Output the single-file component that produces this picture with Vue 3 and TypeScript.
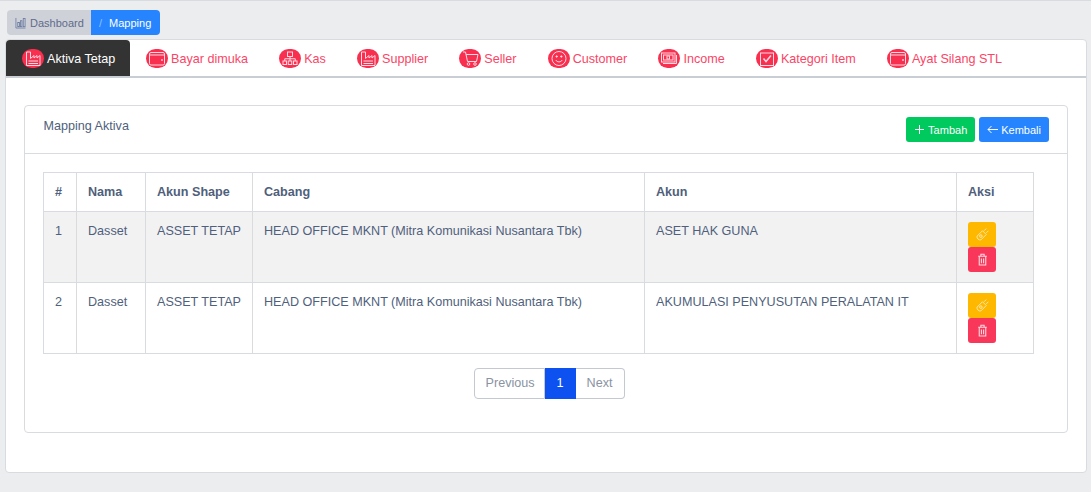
<script setup lang="ts">
const tabs = [
  { label: 'Aktiva Tetap', icon: 'factory' },
  { label: 'Bayar dimuka', icon: 'wallet' },
  { label: 'Kas', icon: 'org' },
  { label: 'Supplier', icon: 'factory' },
  { label: 'Seller', icon: 'cart' },
  { label: 'Customer', icon: 'smile' },
  { label: 'Income', icon: 'money' },
  { label: 'Kategori Item', icon: 'check' },
  { label: 'Ayat Silang STL', icon: 'wallet' },
]

const rows = [
  { no: 1, nama: 'Dasset', shape: 'ASSET TETAP', cabang: 'HEAD OFFICE MKNT (Mitra Komunikasi Nusantara Tbk)', akun: 'ASET HAK GUNA' },
  { no: 2, nama: 'Dasset', shape: 'ASSET TETAP', cabang: 'HEAD OFFICE MKNT (Mitra Komunikasi Nusantara Tbk)', akun: 'AKUMULASI PENYUSUTAN PERALATAN IT' },
]
</script>

<template>
  <div class="page">
    <nav class="crumbs">
      <a class="crumb">
        <svg class="crumb-icon" viewBox="0 0 12 12" fill="none" stroke="#6b7aa0" stroke-width=".9">
          <path d="M1 .5V11.500H11.500" />
          <rect x="3" y="5.500" width="2" height="4.500" />
          <rect x="6" y="3.500" width="1.600" height="6.500" />
          <rect x="9" y="1" width="2" height="9" />
        </svg>
        Dashboard
      </a>
      <a class="crumb current"><span class="slash">/</span>Mapping</a>
    </nav>

    <div class="panel">
      <ul class="tabs">
        <li v-for="(tab, i) in tabs" :key="tab.label" class="tab" :class="{ active: i === 0 }">
          <span class="tab-icon">
            <svg viewBox="0 0 22 19" fill="none" stroke="#ffd9e0" stroke-width="1">
              <template v-if="tab.icon === 'factory'">
                <path d="M4.500 3V16.500H18V6.500L15 9V6.500L12 9V6.500L8.500 9.500V3Z" />
                <path d="M6.500 12H16M6.500 14.500H16" />
              </template>
              <template v-else-if="tab.icon === 'wallet'">
                <rect x="3.500" y="3.500" width="15" height="12.500" rx="1.500" />
                <path d="M3.500 6H18.500" />
                <circle cx="16" cy="11" r=".5" fill="#fff" />
              </template>
              <template v-else-if="tab.icon === 'org'">
                <rect x="8.500" y="3" width="5" height="4.500" />
                <rect x="4" y="12" width="3.500" height="3.500" />
                <rect x="9.250" y="12" width="3.500" height="3.500" />
                <rect x="14.500" y="12" width="3.500" height="3.500" />
                <path d="M11 7.500V12M5.750 12V9.750H16.250V12" />
              </template>
              <template v-else-if="tab.icon === 'cart'">
                <path d="M4 3H6.500L8.500 12.500H17.500L19 5.500H7" />
                <circle cx="9.500" cy="15" r="1.300" />
                <circle cx="16" cy="15" r="1.300" />
              </template>
              <template v-else-if="tab.icon === 'smile'">
                <circle cx="11" cy="9.500" r="7" />
                <path d="M7.800 11C9 13.500 13 13.500 14.200 11" />
                <circle cx="8.700" cy="7.500" r=".7" fill="#fff" />
                <circle cx="13.300" cy="7.500" r=".7" fill="#fff" />
              </template>
              <template v-else-if="tab.icon === 'money'">
                <rect x="3.500" y="4" width="13.500" height="9" />
                <rect x="5.500" y="6" width="9.500" height="5" />
                <rect x="9" y="7" width="2.500" height="3" />
                <path d="M5 14.500H18.500V6" />
              </template>
              <template v-else>
                <rect x="4.500" y="4" width="13" height="12.500" />
                <path d="M7.500 9.500L10 12.500L15 6.500" stroke-width="1.500" />
              </template>
            </svg>
          </span>
          <span>{{ tab.label }}</span>
        </li>
      </ul>

      <div class="panel-body">
        <section class="card">
          <header class="card-head">
            <h5>Mapping Aktiva</h5>
            <div class="actions">
              <button class="btn green">
                <svg class="plus" viewBox="0 0 9 9" fill="none" stroke="#fff" stroke-width="1">
                  <path d="M4.500 0V9M0 4.500H9" />
                </svg>
                Tambah
              </button>
              <button class="btn blue">
                <svg class="arrow" viewBox="0 0 11 9" fill="none" stroke="#fff" stroke-width="1">
                  <path d="M11 4.500H1M4.500 1L1 4.500L4.500 8" />
                </svg>
                Kembali
              </button>
            </div>
          </header>
          <div class="card-body">
            <table>
              <colgroup>
                <col class="c-no" />
                <col class="c-nama" />
                <col class="c-shape" />
                <col class="c-cabang" />
                <col class="c-akun" />
                <col class="c-aksi" />
              </colgroup>
              <thead>
                <tr>
                  <th>#</th>
                  <th>Nama</th>
                  <th>Akun Shape</th>
                  <th>Cabang</th>
                  <th>Akun</th>
                  <th>Aksi</th>
                </tr>
              </thead>
              <tbody>
                <tr v-for="row in rows" :key="row.no">
                  <td>{{ row.no }}</td>
                  <td>{{ row.nama }}</td>
                  <td>{{ row.shape }}</td>
                  <td>{{ row.cabang }}</td>
                  <td>{{ row.akun }}</td>
                  <td class="aksi">
                    <button class="mini yellow">
                      <svg viewBox="0 0 12 12" fill="none" stroke="#ffeec2" stroke-width=".8">
                        <path d="M1 7.500L6 2.500L9.500 6L4.500 11C2.500 11.500 .500 9.500 1 7.500Z" />
                        <circle cx="4.500" cy="7.500" r="1.200" />
                        <path d="M7.500 2.500L9.500 .500M9.500 4.500L11.500 2.500" />
                      </svg>
                    </button>
                    <button class="mini red">
                      <svg viewBox="0 0 12 12" fill="none" stroke="#ffd9e0" stroke-width="1">
                        <path d="M2 3H10M4.500 3V1.200H7.500V3M3 3V11H9V3" />
                        <path d="M5 5V9.500M7 5V9.500" />
                      </svg>
                    </button>
                  </td>
                </tr>
              </tbody>
            </table>

            <div class="pager">
              <a class="page-link first">Previous</a>
              <a class="page-link on">1</a>
              <a class="page-link last">Next</a>
            </div>
          </div>
        </section>
      </div>
    </div>
  </div>
</template>

<style>
html,
body {
  margin: 0;
  background: #ebedef;
}
</style>

<style scoped>
.page {
  box-sizing: border-box;
  height: 492px;
  padding: 9px 4px 0 5px;
  border-top: 1px solid #d8dbe0;
  font-family: "Liberation Sans", Arial, sans-serif;
  font-size: 12.6px;
  color: #505f7c;
  overflow: hidden;
}

.crumbs {
  display: flex;
  width: 153px;
  height: 25px;
  margin-left: 2px;
  font-size: 11px;
}

.crumb {
  display: flex;
  align-items: center;
  width: 84px;
  box-sizing: border-box;
  padding-left: 8px;
  background: #ced2d8;
  color: #5f6b8c;
  border-radius: 4px 0 0 4px;
}

.crumb-icon {
  width: 11px;
  height: 12px;
  margin-right: 4px;
}

.crumb.current {
  width: 69px;
  background: #2684ff;
  color: #fff;
  border-radius: 0 4px 4px 0;
}

.slash {
  margin-right: 7px;
  color: #8ec0ff;
}

.panel {
  box-sizing: border-box;
  height: 434px;
  margin-top: 4px;
  background: #fff;
  border: 1px solid #d8dbe0;
  border-radius: 4px;
}

.tabs {
  display: flex;
  height: 36px;
  margin: 0;
  padding: 0;
  list-style: none;
  border-bottom: 2px solid #c8ced3;
  font-size: 12.6px;
  color: #fb4566;
}

.tab {
  display: flex;
  align-items: center;
  padding: 1px 15.150px 0 16px;
  white-space: nowrap;
}

.tab.active {
  width: 124px;
  box-sizing: border-box;
  background: #333;
  color: #fff;
  border-radius: 4px 4px 0 0;
}

.tab-icon {
  display: block;
  width: 22px;
  height: 19px;
  margin: -1px 3px 0 0;
  background: #f92f50;
  border-radius: 10px;
}

.tab-icon svg {
  display: block;
  width: 22px;
  height: 19px;
}

.panel-body {
  padding: 27px 18px 0 18px;
}

.card {
  box-sizing: border-box;
  height: 328px;
  border: 1px solid #d8dbe0;
  border-radius: 4px;
}

.card-head {
  display: flex;
  justify-content: space-between;
  height: 48px;
  padding: 11px 18px 0 18.500px;
  box-sizing: border-box;
  border-bottom: 1px solid #d8dbe0;
}

.card-head h5 {
  margin: 2px 0 0;
  font-size: 12.6px;
  font-weight: 400;
  line-height: 14px;
}

.actions {
  display: flex;
  gap: 4px;
}

.btn {
  display: flex;
  align-items: center;
  height: 25px;
  padding: 0 8px;
  border: 0;
  border-radius: 3px;
  color: #fff;
  font-family: inherit;
  font-size: 11px;
}

.plus {
  width: 9px;
  height: 9px;
  margin: 0 4px 0 1px;
}

.arrow {
  width: 11px;
  height: 9px;
  margin-right: 3px;
}

.green {
  background: #00c95e;
}

.blue {
  background: #2684ff;
}

.card-body {
  padding: 18px 33px 0 18px;
}

table {
  width: 990px;
  table-layout: fixed;
  border-collapse: collapse;
}

.c-no {
  width: 33px;
}

.c-nama {
  width: 69px;
}

.c-shape {
  width: 107px;
}

.c-cabang {
  width: 392px;
}

.c-akun {
  width: 312px;
}

.c-aksi {
  width: 77px;
}

th,
td {
  box-sizing: border-box;
  padding: 12px 11px;
  border: 1px solid #d8dbe0;
  text-align: left;
  vertical-align: top;
  line-height: 15px;
  white-space: nowrap;
}

th {
  height: 39px;
  padding-bottom: 11px;
  font-weight: 700;
}

td {
  height: 71px;
}

tbody tr:nth-child(odd) {
  background: #f2f2f3;
}

td.aksi {
  padding: 10px 11px;
}

.mini {
  display: flex;
  align-items: center;
  justify-content: center;
  width: 28px;
  height: 25px;
  padding: 0;
  border: 0;
  border-radius: 3px;
}

.mini svg {
  width: 13px;
  height: 13px;
}

.yellow {
  background: #ffb800;
}

.red {
  background: #f9375a;
}

.pager {
  display: flex;
  justify-content: center;
  margin: 14px 0 0 22px;
}

.page-link {
  box-sizing: border-box;
  height: 31px;
  padding: 0 10.500px;
  border: 1px solid #c4c9d0;
  border-left-width: 0;
  line-height: 29px;
  color: #8a93a2;
}

.page-link.first {
  padding-right: 9.500px;
  border-left-width: 1px;
  border-radius: 4px 0 0 4px;
}

.page-link.last {
  padding-right: 11.500px;
  border-radius: 0 4px 4px 0;
}

.page-link.on {
  width: 31px;
  padding: 0;
  background: #0d52f0;
  border-color: #0d52f0;
  color: #fff;
  text-align: center;
}
</style>
